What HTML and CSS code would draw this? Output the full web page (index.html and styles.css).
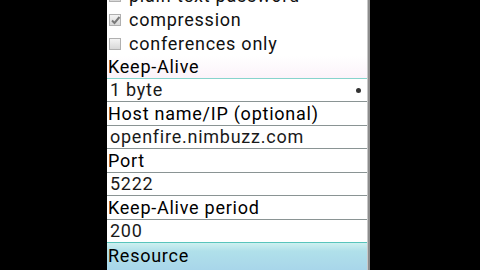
FILE: index.html
```html
<!DOCTYPE html>
<html>
<head>
<meta charset="utf-8">
<link rel="stylesheet" href="styles.css">
</head>
<body>
<div class="screen">
  <div class="list">
    <div class="check-row"><span class="box"></span><span class="ctext">plain-text password</span></div>
    <div class="check-row"><span class="box"><svg viewBox="0 0 11 11" width="11" height="11"><path d="M2 5.5 L4.5 8 L9.5 2" fill="none" stroke="#7a7a7a" stroke-width="2"/></svg></span><span class="ctext">compression</span></div>
    <div class="check-row"><span class="box"></span><span class="ctext">conferences only</span></div>
    <div class="label first">Keep-Alive</div>
    <div class="field teal">1 byte<span class="dot"></span></div>
    <div class="label">Host name/IP (optional)</div>
    <div class="field">openfire.nimbuzz.com</div>
    <div class="label">Port</div>
    <div class="field">5222</div>
    <div class="label">Keep-Alive period</div>
    <div class="field">200</div>
    <div class="label selected">Resource</div>
  </div>
  <div class="scrollbar"></div>
</div>
</body>
</html>
```
FILE: styles.css
```css
html, body {
  margin: 0;
  padding: 0;
  background: #000;
  width: 480px;
  height: 270px;
  overflow: hidden;
}
.screen {
  margin-left: 107px;
  width: 263px;
  height: 270px;
  display: flex;
  background: #fff;
  overflow: hidden;
  font-family: Roboto, "Liberation Sans", sans-serif;
  font-size: 18px;
  letter-spacing: 0.75px;
  color: #000;
}
.list {
  flex: 1;
  margin-top: -16px;
  display: flex;
  flex-direction: column;
}
.check-row {
  height: 24px;
  line-height: 24px;
  display: flex;
  align-items: center;
  padding-left: 2px;
}
.box {
  width: 10px;
  height: 10px;
  border: 1px solid #b0b0b0;
  background: linear-gradient(#f4f4f4, #d8d8d8);
  margin-right: 8px;
  position: relative;
  flex: none;
}
.box svg {
  position: absolute;
  left: -0.5px;
  top: -0.5px;
}
.ctext {
  color: #111;
}
.label {
  height: 23px;
  line-height: 23px;
  border-top: 1px solid #8a9494;
  padding-left: 1px;
  white-space: nowrap;
}
.label.first {
  height: 22px;
  line-height: 22px;
  border-top: none;
  background: linear-gradient(#ffffff, #fbf3fa);
}
.field {
  height: 22px;
  line-height: 22px;
  border-top: 1px solid #8a9494;
  padding-left: 3px;
  color: #1a1a1a;
  display: flex;
  align-items: center;
  white-space: nowrap;
}
.field.teal {
  border-top-color: #86d4cc;
}
.dot {
  margin-left: auto;
  margin-right: 6px;
  width: 5px;
  height: 5px;
  border-radius: 50%;
  background: #333;
}
.selected {
  flex: 1;
  border-top: 1px solid #58c4bc;
  padding-top: 1px;
  background: linear-gradient(#cdf0f0 0%, #b0e0ea 30%, #a8d6ea 100%);
}
.scrollbar {
  width: 2px;
  background: #8c8c8c;
  border-left: 1px solid #c8c8c8;
}
```
